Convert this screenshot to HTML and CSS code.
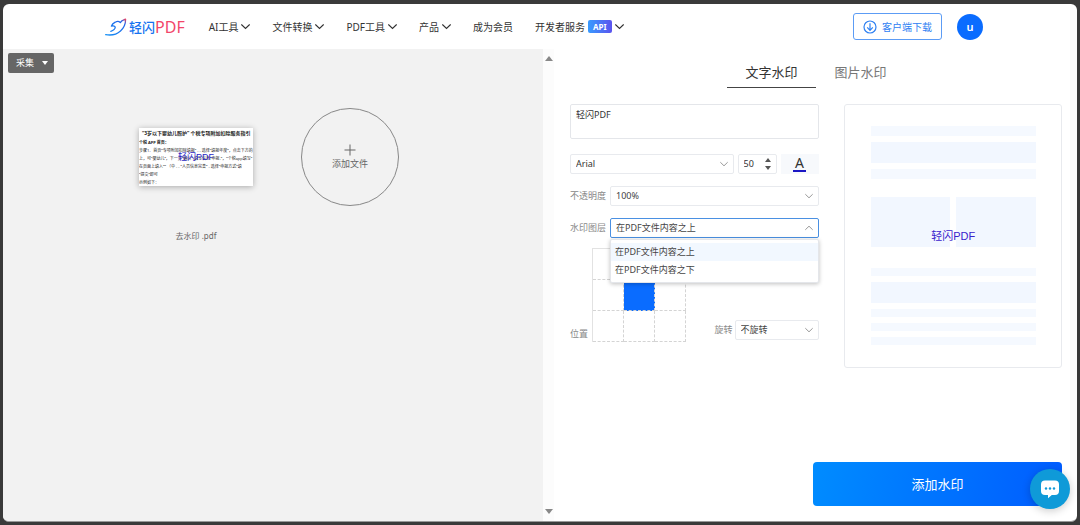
FILE: index.html
```html
<!DOCTYPE html>
<html lang="zh-CN">
<head>
<meta charset="utf-8">
<meta name="viewport" content="width=device-width, initial-scale=1">
<title>轻闪PDF</title>
<link rel="stylesheet" href="styles.css">
</head>
<body>
<svg class="defs" aria-hidden="true">
  <symbol id="chevron" viewBox="0 0 8 8"><path d="M0.3 2.2 4 5.8 7.7 2.2" fill="none" stroke="currentColor" stroke-width="1"/></symbol>
</svg>
<div class="app">
  <header class="header">
    <a class="logo" href="#" aria-label="轻闪PDF">
      <svg class="logo-mark" viewBox="0 0 22 18" aria-hidden="true">
        <defs><linearGradient id="bird" x1="0" y1="1" x2="1" y2="0"><stop offset="0" stop-color="#1690f5"/><stop offset=".85" stop-color="#2464e8"/><stop offset="1" stop-color="#f0405f"/></linearGradient></defs>
        <path d="M0.7 16.600C6 17.600 11.500 16.600 15.500 13 19 9.800 20.600 5.500 20.600 1.200M20.600 1.200C18.500 2.300 16.600 2.200 15.300 4.600 14 3.200 12 3.200 10.200 4.200 8 5.300 6.800 6.600 6.400 8.200 8.300 7.700 10.300 8 10.200 9.500 10 11.300 8 12.600 5.800 13.300" fill="none" stroke="url(#bird)" stroke-width="1.3" stroke-linecap="round" stroke-linejoin="round"/>
      </svg>
      <span class="logo-cn">轻闪</span><span class="logo-en">PDF</span>
    </a>
    <nav class="nav">
      <a href="#">AI工具<svg class="arrow"><use href="#chevron"/></svg></a>
      <a href="#">文件转换<svg class="arrow"><use href="#chevron"/></svg></a>
      <a href="#">PDF工具<svg class="arrow"><use href="#chevron"/></svg></a>
      <a href="#">产品<svg class="arrow"><use href="#chevron"/></svg></a>
      <a href="#">成为会员</a>
      <a href="#">开发者服务<span class="badge">API</span><svg class="arrow"><use href="#chevron"/></svg></a>
    </nav>
    <a class="download" href="#">
      <svg class="download-icon" viewBox="0 0 14 14" aria-hidden="true"><g fill="none" stroke="currentColor" stroke-width="1.2"><circle cx="7" cy="7" r="6"/><path d="M7 3.300v7M4.200 7.400 7 10.300 9.800 7.400"/></g></svg>
      客户端下载
    </a>
    <button class="avatar" type="button">u</button>
  </header>

  <main class="main">
    <section class="files">
      <button class="collect" type="button">采集<span class="caret"></span></button>
      <div class="file-list">
        <figure class="file">
          <div class="thumb-box">
            <div class="thumb">
              <div class="thumb-title">“3岁以下婴幼儿照护” 个税专项附加扣除服务指引</div>
              <div class="thumb-head">个税 APP 首页：</div>
              <div class="thumb-line">步骤1、首页“专项附加扣除填报” - - 选择“填报年度”，点击下方的</div>
              <div class="thumb-line">上，可“婴幼儿”，下一步“确认”-填写信息“申报-”，“个税app填写”</div>
              <div class="thumb-line">在页面上填入“” （中 - - “人员信息完善” - 选择“申报方式”填</div>
              <div class="thumb-line">“提交”即可</div>
              <div class="thumb-line">示例如下：</div>
              <span class="thumb-mark">轻闪PDF</span>
            </div>
          </div>
          <figcaption>去水印 .pdf</figcaption>
        </figure>
        <button class="add-file" type="button">
          <svg class="plus" viewBox="0 0 12 12" aria-hidden="true"><path d="M6 0.500v11M0.500 6h11" stroke="currentColor"/></svg>
          添加文件
        </button>
      </div>
    </section>
    <div class="scrollbar" aria-hidden="true"><span class="scroll-up"></span><span class="scroll-down"></span></div>

    <section class="settings">
      <div class="tabs" role="tablist">
        <button class="tab active" type="button" role="tab" aria-selected="true">文字水印</button>
        <button class="tab" type="button" role="tab" aria-selected="false">图片水印</button>
      </div>
      <div class="columns">
        <form class="form">
          <textarea class="text" aria-label="水印文字">轻闪PDF</textarea>
          <div class="font-row">
            <div class="select"><select aria-label="字体"><option>Arial</option></select><svg class="select-arrow"><use href="#chevron"/></svg></div>
            <div class="number">
              <input type="text" inputmode="numeric" value="50" aria-label="字号">
              <span class="spin"><button class="spin-up" type="button" aria-label="增大"></button><button class="spin-down" type="button" aria-label="减小"></button></span>
            </div>
            <button class="color" type="button" aria-label="文字颜色"><span>A</span></button>
          </div>
          <div class="row">
            <label for="opacity">不透明度</label>
            <div class="select"><select id="opacity"><option>100%</option></select><svg class="select-arrow"><use href="#chevron"/></svg></div>
          </div>
          <div class="row">
            <label for="layer">水印图层</label>
            <div class="select open">
              <select id="layer"><option>在PDF文件内容之上</option><option>在PDF文件内容之下</option></select><svg class="select-arrow"><use href="#chevron"/></svg>
              <ul class="menu" role="listbox" aria-label="水印图层">
                <li class="current" role="option" aria-selected="true">在PDF文件内容之上</li>
                <li role="option" aria-selected="false">在PDF文件内容之下</li>
              </ul>
            </div>
          </div>
          <div class="place-row">
            <span class="place-label" id="place">位置</span>
            <div class="place" role="group" aria-labelledby="place">
              <button type="button" aria-label="左上"></button><button type="button" aria-label="上"></button><button type="button" aria-label="右上"></button>
              <button type="button" aria-label="左"></button><button class="picked" type="button" aria-label="居中"></button><button type="button" aria-label="右"></button>
              <button type="button" aria-label="左下"></button><button type="button" aria-label="下"></button><button type="button" aria-label="右下"></button>
            </div>
            <div class="rotate">
              <label for="rotate">旋转</label>
              <div class="select"><select id="rotate"><option>不旋转</option></select><svg class="select-arrow"><use href="#chevron"/></svg></div>
            </div>
          </div>
        </form>
        <div class="preview">
          <div class="bar"></div>
          <div class="bar block"></div>
          <div class="bar"></div>
          <div class="pair"><div></div><div></div><span class="mark">轻闪PDF</span></div>
          <div class="bar slim"></div>
          <div class="bar block"></div>
          <div class="bar slim"></div>
          <div class="bar slim"></div>
          <div class="bar slim"></div>
        </div>
      </div>
      <button class="submit" type="button">添加水印</button>
    </section>
  </main>
</div>
<button class="chat" type="button" aria-label="在线客服">
  <svg viewBox="0 0 20 20" aria-hidden="true"><path d="M5 1.500h10a4 4 0 0 1 4 4v6.500a4 4 0 0 1-4 4h-3.200L8 19.300V16H5a4 4 0 0 1-4-4V5.500a4 4 0 0 1 4-4z" fill="#fff"/><g fill="#0f9ad8"><circle cx="6" cy="9.500" r="1.200"/><circle cx="10" cy="9.500" r="1.200"/><circle cx="14" cy="9.500" r="1.200"/></g></svg>
</button>
</body>
</html>
```

FILE: styles.css
```css
* { box-sizing: border-box; }

body {
  margin: 0;
  padding: 4px 3px 3px;
  min-height: 100vh;
  display: flex;
  background: #3a3a3a;
  color: #333;
  font: 9px/12px "Noto Sans", "Noto Sans CJK SC", sans-serif;
}

button, select, input, textarea { font: inherit; color: inherit; margin: 0; }
button { padding: 0; border: 0; background: none; cursor: pointer; }
a { color: inherit; text-decoration: none; }
.defs { position: absolute; width: 0; height: 0; }

.app {
  flex: 1;
  display: flex;
  flex-direction: column;
  background: #fff;
  border-bottom: 1px solid #999;
  border-radius: 6px;
  overflow: hidden;
}

/* Header */
.header {
  display: flex;
  align-items: center;
  height: 45px;
  padding: 0 94px 0 102px;
}
.logo { display: flex; align-items: center; line-height: 18px; }
.logo-mark { width: 22px; height: 18px; margin-right: 2px; }
.logo-cn { color: #1673f0; font-size: 13px; font-weight: 500; }
.logo-en { color: #f2466a; font-size: 16px; }
.nav {
  flex: 1;
  display: flex;
  gap: 22px;
  margin-left: 24px;
  font-size: 10px;
  line-height: 14px;
  white-space: nowrap;
}
.nav a { display: flex; align-items: center; }
.arrow { width: 9px; height: 9px; margin-left: 3px; }
.badge {
  margin-left: 3px;
  padding: 0 5px;
  border-radius: 2px;
  background: linear-gradient(90deg, #389bff, #5b53ee);
  color: #fff;
  font-size: 8px;
  font-weight: 700;
  line-height: 13px;
}
.download {
  display: flex;
  align-items: center;
  gap: 5px;
  height: 27px;
  padding: 0 9px;
  border: 1px solid #5c9cf5;
  border-radius: 3px;
  color: #2e80f2;
  font-size: 10px;
}
.download-icon { width: 14px; height: 14px; }
.avatar {
  width: 26px;
  height: 26px;
  margin-left: 15px;
  border-radius: 50%;
  background: #0a6cff;
  color: #fff;
  font-size: 11px;
  font-weight: 600;
}

/* Files */
.main { flex: 1; display: grid; grid-template-columns: 540fr 11px 523fr; }
.files { min-width: 0; padding: 4px 5px; background: #f2f2f2; }
.collect {
  display: flex;
  align-items: center;
  gap: 8px;
  height: 20px;
  padding: 0 6px 0 8px;
  border-radius: 2px;
  background: #666;
  color: #fff;
}
.caret { border: 3px solid transparent; border-top: 4px solid #fff; border-bottom: 0; }
.file-list { display: flex; gap: 48px; margin: 35px 0 0 131px; }
.file { margin: 0; width: 114px; text-align: center; }
.thumb-box { display: flex; align-items: center; height: 98px; }
.thumb {
  position: relative;
  width: 114px;
  height: 58px;
  overflow: hidden;
  background: #fff;
  box-shadow: 0 1px 6px rgba(0, 0, 0, .3);
  color: #222;
  font-size: 4px;
  line-height: 8px;
  text-align: left;
  white-space: nowrap;
}
.thumb-title { padding-left: 3px; font-size: 5px; font-weight: 700; line-height: 11px; }
.thumb-head { font-weight: 700; }
.thumb-mark {
  position: absolute;
  inset: 0;
  display: grid;
  place-items: center;
  color: #2a1fc4;
  font: 9px/12px "Liberation Sans", "Noto Sans CJK SC", sans-serif;
}
.file figcaption { margin-top: 24px; color: #666; font-size: 8px; }
.add-file {
  display: flex;
  flex-direction: column;
  align-items: center;
  justify-content: center;
  gap: 2px;
  width: 98px;
  height: 98px;
  border: 1px solid #888;
  border-radius: 50%;
  color: #666;
}
.plus { width: 12px; height: 12px; }

.scrollbar {
  display: flex;
  flex-direction: column;
  justify-content: space-between;
  align-items: center;
  padding: 7px 0;
  background: #fcfcfc;
}
.scroll-up { border: 4px solid transparent; border-top: 0; border-bottom: 5px solid #888; }
.scroll-down { border: 4px solid transparent; border-bottom: 0; border-top: 5px solid #888; }

/* Settings */
.settings { min-width: 0; display: flex; flex-direction: column; padding: 7px 15px 15px 16px; }
.tabs { display: flex; justify-content: center; }
.tab {
  width: 89px;
  height: 32px;
  border-bottom: 1px solid transparent;
  color: #777;
  font-size: 13px;
}
.tab.active { border-bottom-color: #444; color: #333; }
.columns {
  display: grid;
  grid-template-columns: 248fr 218fr;
  gap: 25px;
  align-items: start;
  margin-top: 16px;
}
.form { display: flex; flex-direction: column; gap: 12px; }
.text {
  display: block;
  width: 100%;
  height: 35px;
  margin-bottom: 3px;
  padding: 4px 5px;
  border: 1px solid #e4e6ea;
  border-radius: 2px;
  background: #fff;
  resize: none;
}
.font-row { display: flex; gap: 4px; }
.select { position: relative; flex: 1; height: 20px; }
.select select {
  display: block;
  width: 100%;
  height: 100%;
  padding: 0 16px 0 5px;
  border: 1px solid #e8eaee;
  border-radius: 2px;
  background: #fff;
  appearance: none;
}
.select-arrow {
  position: absolute;
  top: 6px;
  right: 6px;
  width: 8px;
  height: 8px;
  color: #999;
  pointer-events: none;
}
.number {
  display: flex;
  align-items: center;
  width: 39px;
  height: 20px;
  padding: 0 5px;
  border: 1px solid #e8eaee;
  border-radius: 2px;
}
.number input { flex: 1; min-width: 0; padding: 0; border: 0; background: none; }
.spin { display: flex; flex-direction: column; gap: 4px; }
.spin-up { border: 3px solid transparent; border-top: 0; border-bottom: 4px solid #555; }
.spin-down { border: 3px solid transparent; border-bottom: 0; border-top: 4px solid #555; }
.color { width: 38px; height: 20px; background: #f7f9fc; font-size: 14px; line-height: 14px; }
.color span { display: inline-block; padding: 0 2px; border-bottom: 2px solid #1b17c4; }
.row { display: flex; align-items: center; color: #888; }
.row label { width: 40px; white-space: nowrap; }
.row .select, .rotate .select { color: #444; }
.open select { border-color: #4a90e2; }
.open .select-arrow { transform: rotate(180deg); }
.menu {
  position: absolute;
  z-index: 1;
  top: 21px;
  left: 0;
  right: 0;
  margin: 0;
  padding: 3px 0;
  border: 1px solid #e4e6ea;
  border-radius: 2px;
  background: #fff;
  box-shadow: 0 1px 4px rgba(0, 0, 0, .25);
  list-style: none;
}
.menu li { padding: 0 4px; line-height: 18px; }
.menu .current { background: #f2f8ff; }
.place-row { display: flex; align-items: flex-end; margin-top: -2px; color: #888; }
.place-label { padding-bottom: 2px; }
.place {
  display: grid;
  grid-template-columns: repeat(3, 31px);
  grid-auto-rows: 31px;
  margin-left: 4px;
  border: 1px solid #e2e2e2;
  border-width: 1px 0 0 1px;
}
.place button { border: 1px dashed #d4d4d4; border-width: 0 1px 1px 0; }
.place .picked { background: #0a6cff; }
.rotate { display: flex; align-items: center; gap: 2px; margin: 0 0 2px auto; }
.rotate .select { width: 84px; flex: none; }

.preview {
  display: grid;
  gap: 6px;
  padding: 21px 25px 22px 26px;
  border: 1px solid #e8eaee;
  border-radius: 3px;
}
.bar { height: 10px; background: #f5f9ff; }
.bar.block { height: 21px; background: #f2f7ff; }
.bar.slim { height: 8px; }
.pair {
  position: relative;
  display: grid;
  grid-template-columns: 1fr 1fr;
  gap: 6px;
  height: 50px;
  margin: 12px 0 15px;
}
.pair div { background: #f2f7ff; }
.mark {
  position: absolute;
  left: 0;
  right: 0;
  bottom: 4px;
  color: #3a22cc;
  font: 11px/14px "Liberation Sans", "Noto Sans CJK SC", sans-serif;
  text-align: center;
}
.submit {
  align-self: flex-end;
  width: 249px;
  height: 44px;
  margin-top: auto;
  border-radius: 4px;
  background: linear-gradient(100deg, #008cff, #005cff);
  color: #fff;
  font-size: 13px;
}
.chat {
  position: fixed;
  right: 10px;
  bottom: 16px;
  display: grid;
  place-items: center;
  width: 40px;
  height: 40px;
  border-radius: 50%;
  background: #0f9ad8;
  box-shadow: 0 2px 8px rgba(0, 0, 0, .2);
}
.chat svg { width: 20px; height: 20px; }
```
